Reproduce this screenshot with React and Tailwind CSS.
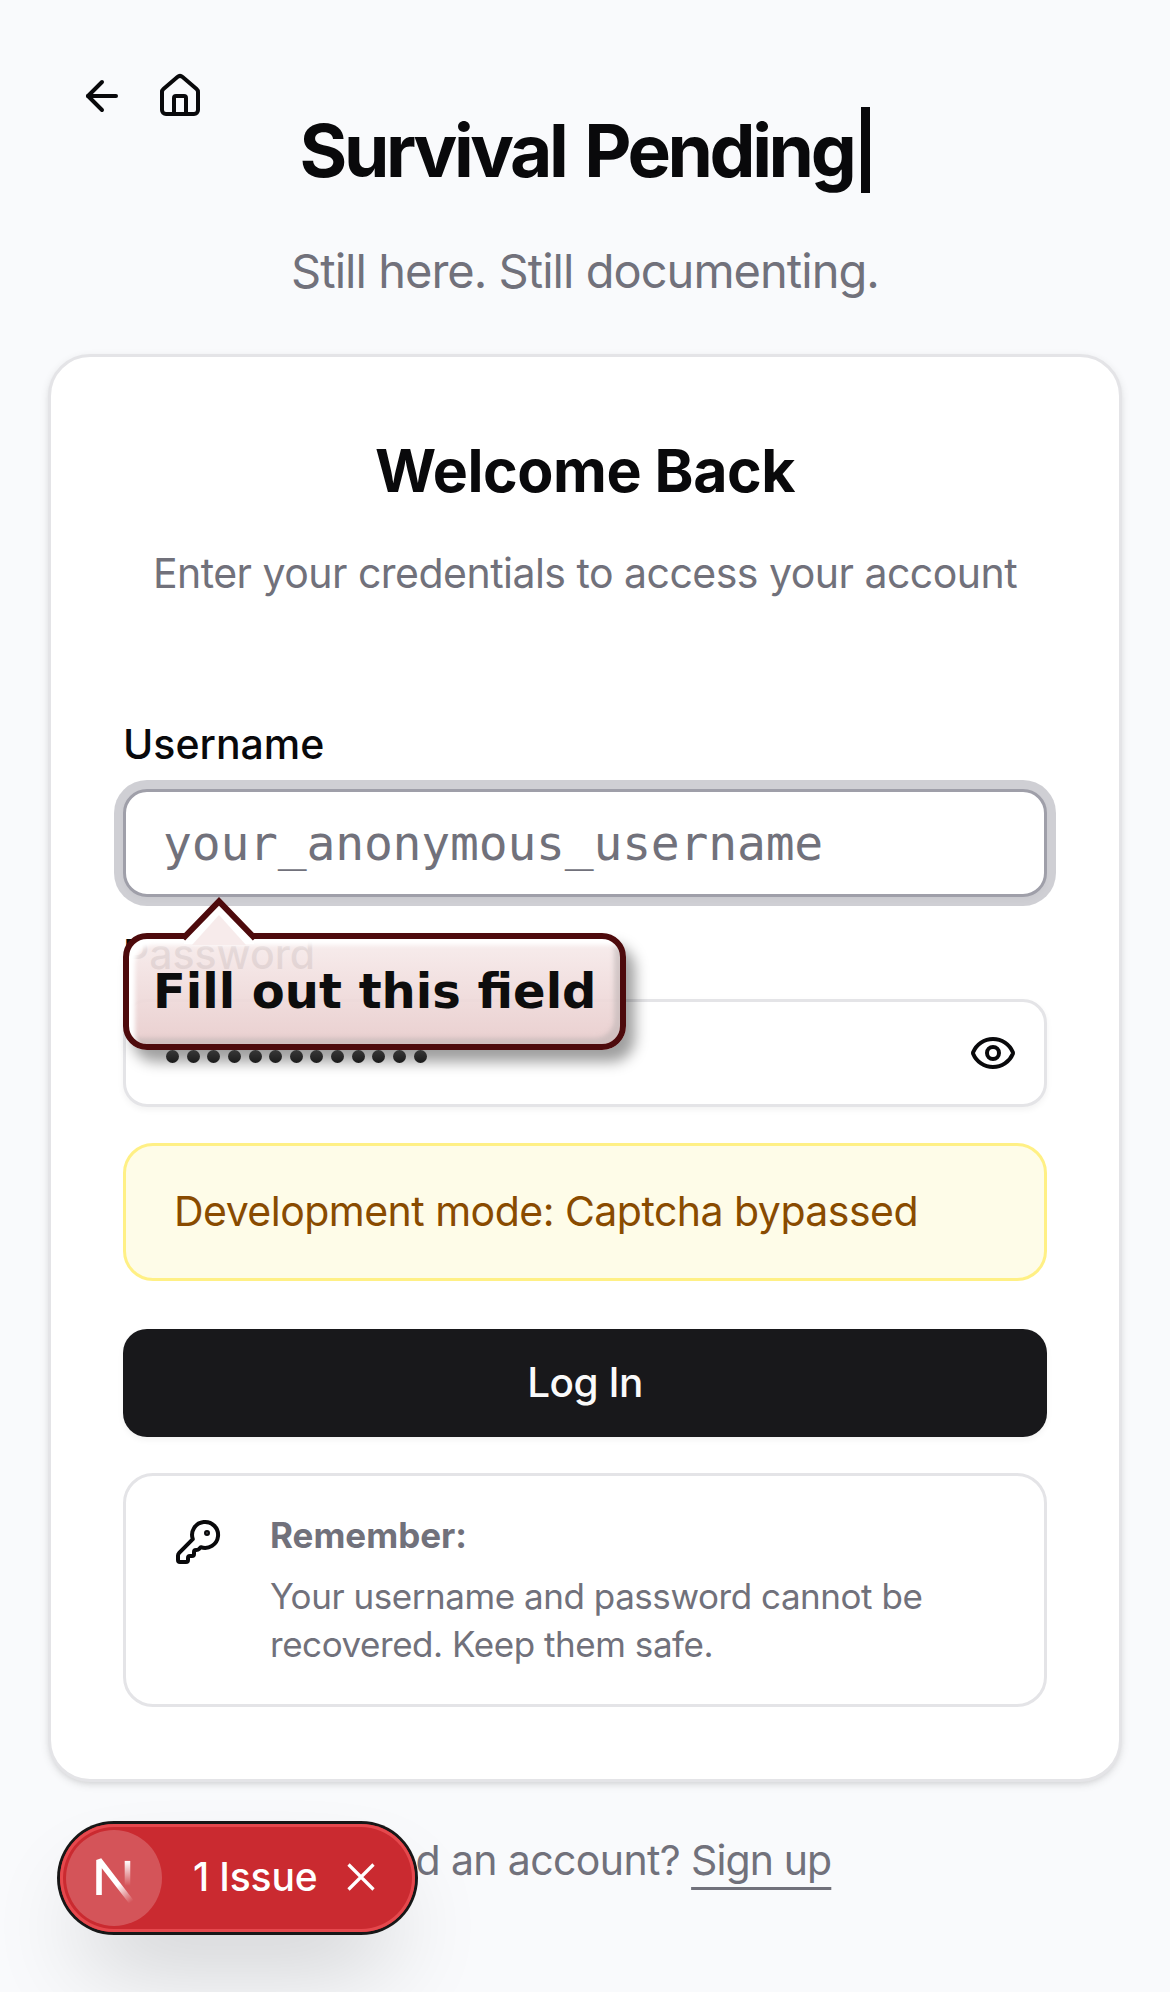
import { ArrowLeft, House, Eye, KeyRound } from 'lucide-react';

const DOTS = Array.from({ length: 13 }, (_, i) => i);

function TopNav() {
  return (
    <nav className="flex gap-[30px] pt-[72px] pl-[78px] text-[#09090b]">
      <ArrowLeft className="size-12" />
      <House className="size-12" />
    </nav>
  );
}

function Heading() {
  return (
    <header className="-mt-[14px] flex flex-col items-center">
      <h1 className="flex h-[90px] items-center text-[73px] leading-[90px] font-bold tracking-[-3.4px] text-[#09090b] [word-spacing:5px]">
        Survival Pending
        <span className="mb-[2px] ml-[8px] h-[86px] w-[9px] bg-[#09090b]" />
      </h1>
      <p className="mt-[39px] text-[47px] leading-[72px] tracking-[-0.97px] text-[#71717b]">
        Still here. Still documenting.
      </p>
    </header>
  );
}

function ValidationBubble() {
  return (
    <div className="absolute top-[108px] left-0 z-10 pt-9">
      <div className="flex h-[117px] w-[503px] items-center rounded-[24px] border-[6px] border-[#4d0a0c] bg-linear-to-b from-[#f7ecec]/93 to-[#e8cccc]/93 pb-[2px] pl-[24px] font-['DejaVu_Sans'] text-[48px] leading-none font-bold whitespace-nowrap text-[#0d0d0d] shadow-[9px_12px_14px_rgba(0,0,0,0.38),inset_7px_7px_4px_-1px_#fff,inset_-7px_-7px_4px_-1px_rgba(190,180,180,0.6)]">
        Fill out this field
      </div>
      <svg className="absolute top-0 left-[54px]" width="84" height="52" viewBox="0 0 84 52" fill="none">
        <path d="M7 43 42 6l35 37v4H7z" fill="#fff" />
        <path d="M15 48 42 18l27 30z" fill="#f7ebeb" />
        <path d="M6 41.500 42 4.300l36 37.200" stroke="#4d0a0c" strokeWidth="6" />
      </svg>
    </div>
  );
}

function UsernameField() {
  return (
    <div className="mt-[120px]">
      <label className="block text-[41px] leading-[42px] font-medium text-[#09090b]">Username</label>
      <div className="relative mt-6 flex h-[108px] items-center rounded-[24px] border-[3px] border-[#9f9fa9] bg-white pl-[37px] shadow-[0_0_0_9px_rgba(159,159,169,0.5),0_3px_6px_rgba(0,0,0,0.05)]">
        <span className="font-['DejaVu_Sans_Mono'] text-[48px] leading-none tracking-[-0.2px] text-[#71717b]">
          your_anonymous_username
        </span>
        <div className="absolute -top-[3px] -left-[3px]">
          <ValidationBubble />
        </div>
      </div>
    </div>
  );
}

function PasswordField() {
  return (
    <div className="mt-9">
      <label className="block text-[41px] leading-[42px] font-medium text-[#09090b]">Password</label>
      <div className="mt-6 flex h-[108px] items-center justify-between rounded-[24px] border-[3px] border-[#e4e4e7] bg-white pr-[27px] pl-[40px] shadow-[0_3px_6px_rgba(0,0,0,0.05)]">
        <div className="flex gap-[7.65px] pt-[7px]">
          {DOTS.map((i) => (
            <span key={i} className="size-[13px] rounded-full bg-linear-to-b from-[#5a5a5a] to-[#202020]" />
          ))}
        </div>
        <Eye className="size-12 text-[#09090b]" />
      </div>
    </div>
  );
}

function NextLogo() {
  return (
    <svg className="mt-[6px] -ml-[3px] overflow-visible" width="42" height="48" viewBox="0 0 14 16" fill="none">
      <defs>
        <linearGradient id="diag" x1="9" y1="9" x2="13.400" y2="14.800" gradientUnits="userSpaceOnUse">
          <stop stopColor="#fff" />
          <stop offset="1" stopColor="#fff" stopOpacity="0" />
        </linearGradient>
        <linearGradient id="stem" x1="11.800" y1="1.300" x2="11.800" y2="9.600" gradientUnits="userSpaceOnUse">
          <stop stopColor="#fff" />
          <stop offset="1" stopColor="#fff" stopOpacity="0" />
        </linearGradient>
      </defs>
      <path d="M13.300 15.200 2.340 1v11.700" stroke="url(#diag)" strokeWidth="1.860" strokeLinejoin="bevel" />
      <path d="M11.825 1.300v8.500" stroke="url(#stem)" strokeWidth="1.860" />
    </svg>
  );
}

function IssueBadge() {
  return (
    <div className="absolute top-[1824px] left-[60px] flex h-[108px] w-[355px] items-center rounded-full bg-[#ca2a30] pl-[6px] text-white shadow-[0_0_0_3px_#171717,inset_0_0_0_3px_#e5484d,0_48px_96px_-24px_rgba(0,0,0,0.24)]">
      <span className="flex size-24 items-center justify-center rounded-full bg-white/20">
        <NextLogo />
      </span>
      <span className="mb-[3px] ml-[31px] text-[39px] leading-none font-medium tracking-[-0.15px]">1 Issue</span>
      <svg className="mb-[2px] ml-[28px]" width="30" height="30" viewBox="0 0 30 30" fill="none">
        <path d="M2.500 2.500l25 25M27.500 2.500l-25 25" stroke="#fff" strokeWidth="3.200" />
      </svg>
    </div>
  );
}

export default function App() {
  return (
    <main className="relative h-[1992px] w-[1170px] overflow-hidden bg-[#f9fafc] font-['Inter',sans-serif]">
      <TopNav />
      <Heading />
      <section className="mx-12 mt-[47px] rounded-[42px] border-[3px] border-[#e4e4e7] bg-white px-[72px] pt-[78px] pb-[72px] shadow-[0_3px_9px_rgba(0,0,0,0.1),0_3px_6px_-3px_rgba(0,0,0,0.1)]">
        <h2 className="text-center text-[59px] leading-[72px] font-bold tracking-[-0.45px] text-[#09090b]">
          Welcome Back
        </h2>
        <p className="mt-9 text-center text-[41px] leading-[60px] tracking-[-0.52px] whitespace-nowrap text-[#71717b]">
          Enter your credentials to access your account
        </p>
        <UsernameField />
        <PasswordField />
        <div className="mt-9 flex h-[138px] items-center rounded-[30px] border-[3px] border-[#fff085] bg-[#fefce8] pl-12 text-[41px] tracking-[-0.52px] text-[#894b00]">
          Development mode: Captcha bypassed
        </div>
        <button className="mt-12 flex h-[108px] w-full items-center justify-center rounded-[24px] bg-[#18181b] text-[40.5px] font-medium tracking-[-0.5px] text-[#fafafa] shadow-[0_3px_6px_rgba(0,0,0,0.05)]">
          Log In
        </button>
        <div className="mt-9 flex h-[234px] gap-12 rounded-[30px] border-[3px] border-[#e4e4e7] pt-9 pl-12 text-[#71717b]">
          <KeyRound className="mt-[6px] size-12 text-[#09090b]" />
          <div>
            <p className="-mt-px text-[35px] leading-[48px] font-bold">Remember:</p>
            <p className="mt-[13px] text-[35px] leading-[48px] tracking-[-0.45px] whitespace-nowrap">
              Your username and password cannot be
              <br />
              recovered. Keep them safe.
            </p>
          </div>
        </div>
      </section>
      <p className="mt-12 text-center text-[41px] leading-[60px] tracking-[-0.62px] text-[#71717b]">
        Need an account?{' '}
        <a className="tracking-[-0.9px] underline decoration-[3px] underline-offset-[12px] [text-decoration-skip-ink:none]">
          Sign up
        </a>
      </p>
      <IssueBadge />
    </main>
  );
}
